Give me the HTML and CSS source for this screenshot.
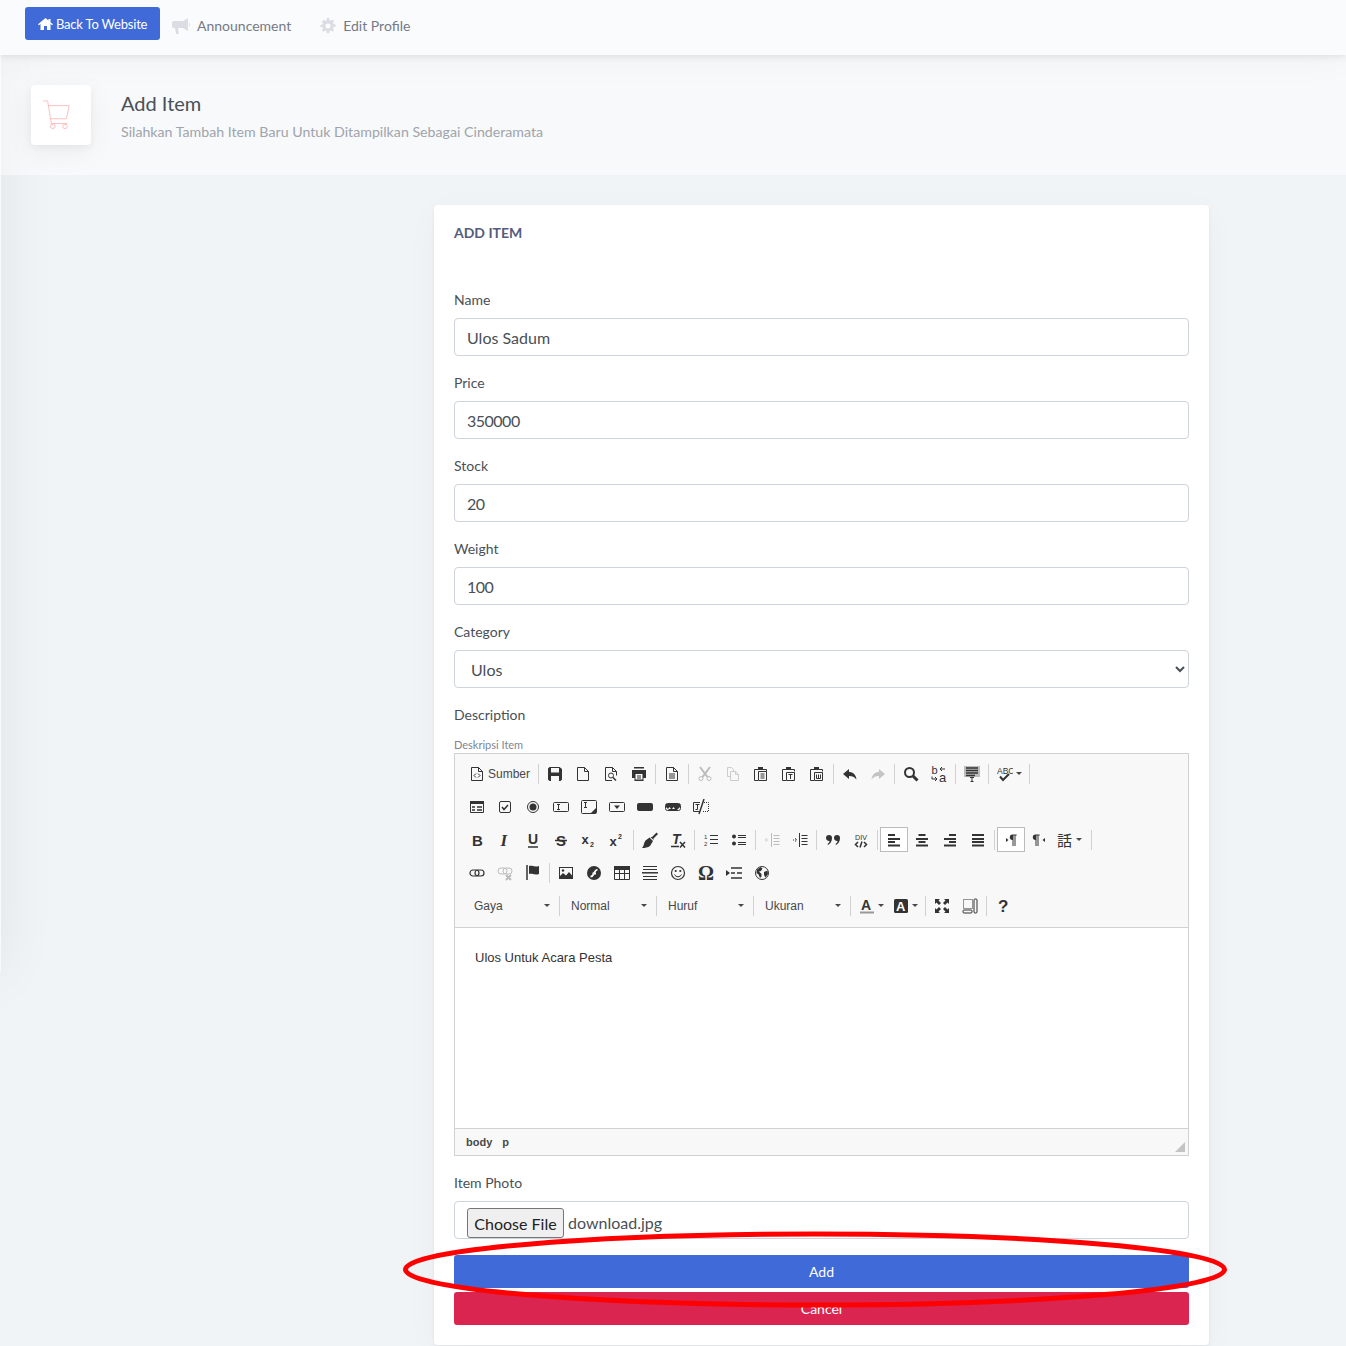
FILE: index.html
```html
<!DOCTYPE html>
<html lang="en">
<head>
  <meta charset="UTF-8">
  <title>Add Item</title>
  <link rel="stylesheet" href="styles.css">
</head>
<body>
  <svg class="defs" width="0" height="0">
    <defs>
      <symbol id="source" viewBox="0 0 16 16"><path class="ln" d="M2.500 1.500h7l4 4v9h-11zM9.500 1.500v4h4"/><path class="ln" d="M7 7.500 5 9.500l2 2M9 7.500l2 2-2 2"/></symbol>
      <symbol id="save" viewBox="0 0 16 16"><path class="sd" fill-rule="evenodd" d="M1 2.500 2.500 1h10L15 3v10.500L13.500 15h-11L1 13.500zM4 2v4.500h8V2zM4 10v5h8v-5z"/></symbol>
      <symbol id="newpage" viewBox="0 0 16 16"><path class="ln" d="M2.500 1.500h7l4 4v9h-11zM9.500 1.500v4h4"/></symbol>
      <symbol id="preview" viewBox="0 0 16 16"><path class="ln" d="M9 14.500H2.500v-13h7l4 4v4M9.500 1.500v4h4"/><circle class="ln" cx="8" cy="9.500" r="2.500"/><path class="thick" d="m10 11.500 3 3"/></symbol>
      <symbol id="print" viewBox="0 0 16 16"><path class="sd" fill-rule="evenodd" d="M3 1h10v1.500H3zM1 4h14v8h-2.500v3h-9v-3H1zM4.500 8v5.500h7V8z"/><path class="thin" d="M6 10h4M6 12h4"/></symbol>
      <symbol id="templates" viewBox="0 0 16 16"><path class="ln" d="M2.500 1.500h7l4 4v9h-11zM9.500 1.500v4h4M5 8h6M5 10h6M5 12h6"/></symbol>
      <symbol id="cut" viewBox="0 0 16 16"><circle class="ln-off" cx="4" cy="12.500" r="2"/><circle class="ln-off" cx="12" cy="12.500" r="2"/><path class="thick-off" d="M3 1l7.500 10M13 1 5.500 11"/></symbol>
      <symbol id="copy" viewBox="0 0 16 16"><path class="ln-pale" d="M2.500 1.500h4l2 2v2M2.500 1.500v9h3M5.500 5.500h5l3 3v6h-8zM10.500 5.500v3h3"/></symbol>
      <symbol id="paste" viewBox="0 0 16 16"><path class="ln" d="M5 3.500H1.500v11H5M10 3.500h3.500v2"/><path class="sd" d="M5 1h5v3H5z"/><path class="ln" d="M5.500 5.500h8v9h-8zM7.500 8h4M7.500 10h4M7.500 12h4"/></symbol>
      <symbol id="pastetext" viewBox="0 0 16 16"><path class="ln" d="M5 3.500H1.500v11H5M10 3.500h3.500v2"/><path class="sd" d="M5 1h5v3H5z"/><path class="ln" d="M5.500 6.500h8v8h-8zM7.500 8.500h4M9.500 8.500v4.500"/></symbol>
      <symbol id="pasteword" viewBox="0 0 16 16"><path class="ln" d="M5 3.500H1.500v11H5M10 3.500h3.500v2"/><path class="sd" d="M5 1h5v3H5z"/><path class="ln" d="M5.500 6.500h8v8h-8zM7.500 8.500v4h4v-4M9.500 8.500v4"/></symbol>
      <symbol id="undo" viewBox="0 0 16 16"><path class="sd" d="M7 3 1 8l6 5v-3c3.500 0 5.500 1 7.500 3.500C14 8.500 11 6 7 6z"/></symbol>
      <symbol id="redo" viewBox="0 0 16 16"><path class="sd-off" d="m9 3 6 5-6 5v-3c-3.500 0-5.500 1-7.500 3.500C2 8.500 5 6 9 6z"/></symbol>
      <symbol id="find" viewBox="0 0 16 16"><circle class="wide" cx="6.500" cy="6.500" r="4.500"/><path class="wider" d="m10 10 4.500 4.500"/></symbol>
      <symbol id="replace" viewBox="0 0 16 16"><text class="glyph" x="0.500" y="8" font-size="11">b</text><text class="glyph" x="8" y="16" font-size="13">a</text><path class="thin" d="M9 3h5M11 1 9 3l2 2M1 10.500v2.500h5M4 11l2 2-2 2"/></symbol>
      <symbol id="selectall" viewBox="0 0 16 16"><path fill="#bbb" d="M0 0h16v11H0z"/><path class="thick" d="M2 2h12M2 4.500h12M2 7h12M2 9.500h9"/><path class="thin" d="M6 11.500h4M8 11.500v4M6.500 15.500h3"/></symbol>
      <symbol id="spell" viewBox="0 0 16 16"><text class="glyph" x="0" y="8" font-size="8.500">ABC</text><path class="wide" d="m3 10.500 3 3.500 6-6"/></symbol>

      <symbol id="form" viewBox="0 0 16 16"><path class="ln" d="M1.500 2.500h13v11h-13z"/><path class="sd" d="M1 2h14v3H1z"/><path class="thick" d="M3 8h3M8 8h5M3 11h3M8 11h5"/></symbol>
      <symbol id="checkbox" viewBox="0 0 16 16"><rect class="ln" x="2.500" y="2.500" width="11" height="11" rx="1.500"/><path class="thick" d="m5 8 2 2.500L11 6"/></symbol>
      <symbol id="radio" viewBox="0 0 16 16"><circle class="ln" cx="8" cy="8" r="5.500"/><circle class="sd" cx="8" cy="8" r="3.500"/></symbol>
      <symbol id="textfield" viewBox="0 0 16 16"><rect class="ln" x="0.500" y="3.500" width="15" height="9" rx="1"/><path class="ln" d="M4 5.500h3M5.500 5.500v5M4 10.500h3"/></symbol>
      <symbol id="textarea" viewBox="0 0 16 16"><rect class="ln" x="0.500" y="1.500" width="15" height="13" rx="1"/><path class="ln" d="M3 3.500h3M4.500 3.500v5M3 8.500h3"/><path class="sd" d="M15 9v5H10z"/></symbol>
      <symbol id="select" viewBox="0 0 16 16"><rect class="ln" x="0.500" y="3.500" width="15" height="9" rx="1"/><path class="sd" d="M5 6.500h6L8 10z"/></symbol>
      <symbol id="button" viewBox="0 0 16 16"><rect class="sd" x="0" y="4" width="16" height="8" rx="2"/></symbol>
      <symbol id="imagebutton" viewBox="0 0 16 16"><rect class="ln" x="0.500" y="4.500" width="15" height="7" rx="2"/><path class="sd" d="M1 8l3 3h8l3-3v-3H1z"/><path fill="#f8f8f8" d="M3 10l1.500-2 1.500 2zM7 10l1.500-2 1.500 2z"/></symbol>
      <symbol id="hidden" viewBox="0 0 16 16"><path class="ln" d="M7 3.500H.500v9H6M2.500 5.500h4M4.500 5.500v5M2.500 10.500h2"/><path class="thick" d="M11 0 6 15"/><path class="dots" d="M9 3.500h6.500v9H9"/></symbol>

      <symbol id="bold" viewBox="0 0 16 16"><text class="glyph" x="3" y="13.500" font-size="15" font-weight="700">B</text></symbol>
      <symbol id="italic" viewBox="0 0 16 16"><text class="glyph serif" x="3.500" y="13.500" font-size="17" font-weight="700" font-style="italic">I</text></symbol>
      <symbol id="underline" viewBox="0 0 16 16"><text class="glyph" x="3" y="12" font-size="14" font-weight="700">U</text><path class="thick" d="M3 15h10"/></symbol>
      <symbol id="strike" viewBox="0 0 16 16"><text class="glyph" x="3" y="13.500" font-size="15" font-weight="700">S</text><path class="thick" d="M2 8.500h12"/></symbol>
      <symbol id="sub" viewBox="0 0 16 16"><text class="glyph" x="0.500" y="11.500" font-size="13" font-weight="700">x</text><text class="glyph" x="9" y="15" font-size="7" font-weight="700">2</text></symbol>
      <symbol id="sup" viewBox="0 0 16 16"><text class="glyph" x="0.500" y="13.500" font-size="13" font-weight="700">x</text><text class="glyph" x="9" y="7" font-size="7" font-weight="700">2</text></symbol>
      <symbol id="brush" viewBox="0 0 16 16"><path class="sd" d="M10 5 14.500 .500 16 2l-4.500 4.500L11.500 8 8.500 5zM7.500 5.500l3.500 3.500L8 14c-2 1.500-5 2-8 2 2-1.500 1.500-5 3.500-7.500z"/></symbol>
      <symbol id="removeformat" viewBox="0 0 16 16"><text class="glyph" x="2" y="12" font-size="14" font-weight="700" font-style="italic">T</text><path class="thick" d="M1 14.500h8"/><path class="thick" d="m10 10 5 5.500M15 10l-5 5.500"/></symbol>
      <symbol id="ol" viewBox="0 0 16 16"><text class="glyph" x="1" y="7" font-size="6">1</text><text class="glyph" x="1" y="14" font-size="6">2</text><path class="ln" d="M7 3.500h8M7 7.500h8M7 11.500h8"/></symbol>
      <symbol id="ul" viewBox="0 0 16 16"><circle class="sd" cx="3" cy="4.500" r="2"/><circle class="sd" cx="3" cy="11.500" r="2"/><path class="ln" d="M7 3.500h8M7 5.500h8M7 10.500h8M7 12.500h8"/></symbol>
      <symbol id="outdent" viewBox="0 0 16 16"><path class="ln-off" d="M7.500 1v14M9.500 3.500h6M9.500 6.500h6M9.500 9.500h6M9.500 12.500h6"/><path class="dots-off" d="M1 8h4M3 6l-2 2 2 2"/></symbol>
      <symbol id="indent" viewBox="0 0 16 16"><path class="ln" d="M7.500 1v14M9.500 3.500h6M9.500 6.500h6M9.500 9.500h6M9.500 12.500h6"/><path class="dots" d="M1 8h4M3 6l2 2-2 2"/></symbol>
      <symbol id="quote" viewBox="0 0 16 16"><path class="sd" d="M1 6a3 3 0 1 1 6 0C7 9.500 5.500 11.500 3 13l-.500-1C4 11 4.500 10 4.500 9A3 3 0 0 1 1 6zM9 6a3 3 0 1 1 6 0C15 9.500 13.500 11.500 11 13l-.500-1C12 11 12.500 10 12.500 9A3 3 0 0 1 9 6z"/></symbol>
      <symbol id="div" viewBox="0 0 16 16"><text class="glyph" x="2" y="7.500" font-size="8" textLength="12" lengthAdjust="spacingAndGlyphs">DIV</text><path class="thick" d="M5 10 2.500 12.500 5 15M11 10l2.500 2.500L11 15M9 9.500l-2 6"/></symbol>
      <symbol id="left" viewBox="0 0 16 16"><path class="bars" d="M2 3h7M2 7h12M2 10h7M2 13.500h12"/></symbol>
      <symbol id="center" viewBox="0 0 16 16"><path class="bars" d="M4.500 3h7M2 7h12M4.500 10h7M2 13.500h12"/></symbol>
      <symbol id="right" viewBox="0 0 16 16"><path class="bars" d="M7 3h7M2 7h12M7 10h7M2 13.500h12"/></symbol>
      <symbol id="justify" viewBox="0 0 16 16"><path class="bars" d="M2 3h12M2 7h12M2 10h12M2 13.500h12"/></symbol>
      <symbol id="ltr" viewBox="0 0 16 16"><path class="sd" d="M3 6v4l2.500-2zM9.500 2.500a2.700 2.700 0 0 0 0 5.400V14h1V3.500h1V14h1V3.500h1.200v-1z"/></symbol>
      <symbol id="rtl" viewBox="0 0 16 16"><path class="sd" d="M14 6v4l-2.500-2zM4.500 2.500a2.700 2.700 0 0 0 0 5.400V14h1V3.500h1V14h1V3.500h1.200v-1z"/></symbol>
      <symbol id="lang" viewBox="0 0 16 16"><text class="glyph cjk" x="0" y="14" font-size="15">話</text></symbol>

      <symbol id="link" viewBox="0 0 16 16"><rect class="thickish" x="1" y="5" width="9" height="6" rx="3"/><rect class="thickish" x="6" y="5" width="9" height="6" rx="3"/></symbol>
      <symbol id="unlink" viewBox="0 0 16 16"><rect class="ln-off" x="1" y="3" width="9" height="6" rx="3"/><rect class="ln-off" x="6" y="3" width="9" height="6" rx="3"/><path class="thick-off" d="m9 10 5 5M14 10l-5 5"/></symbol>
      <symbol id="anchor" viewBox="0 0 16 16"><path class="thick" d="M2 0v15"/><path class="sd" d="M4 1c3-1 5 1.500 10 0v8c-5 1.500-7-1-10 0z"/></symbol>
      <symbol id="image" viewBox="0 0 16 16"><rect class="ln" x="1.500" y="2.500" width="13" height="11"/><path class="sd" d="M2 13v-2l3-3 3 2.500L11 7l3 3.500V13z"/><circle class="sd" cx="5" cy="5.500" r="1.200"/></symbol>
      <symbol id="flash" viewBox="0 0 16 16"><circle class="sd" cx="8" cy="8" r="7"/><path class="wide-white" d="M4.500 11.500c3 0 2.500-2 3.500-3.500s1.500-3 3.500-3.500M6.500 8.500h3.500"/></symbol>
      <symbol id="table" viewBox="0 0 16 16"><path class="sd" d="M0 1h16v4H0z"/><path class="ln" d="M.500 1.500h15v13H.500zM.500 8.500h15M5.500 5v9.500M10.500 5v9.500"/></symbol>
      <symbol id="hr" viewBox="0 0 16 16"><path class="ln" d="M1 1.500h14M1 4.500h14M1 11.500h14M1 14.500h14"/><path class="thick" d="M0 7.800h16"/></symbol>
      <symbol id="smiley" viewBox="0 0 16 16"><circle class="thickish" cx="8" cy="8" r="6.500"/><circle class="sd" cx="5.700" cy="6" r="1.100"/><circle class="sd" cx="10.300" cy="6" r="1.100"/><path class="ln" d="M4.500 9.500c1.500 3 5.500 3 7 0"/></symbol>
      <symbol id="omega" viewBox="0 0 16 16"><text class="glyph serif" x="0" y="15" font-size="20" font-weight="700">Ω</text></symbol>
      <symbol id="pagebreak" viewBox="0 0 16 16"><path class="sd" d="M0 5v6l4-3z"/><path class="thick" d="M5 3h11M5 13h11M5 8h4M11 8h5"/></symbol>
      <symbol id="iframe" viewBox="0 0 16 16"><circle class="ln" cx="8" cy="8" r="6.500"/><path class="sd" d="M3 4.500 6.500 2 8.500 3.500 7 6 5 6.500 7.500 9 7.500 11.500 6 13 4.500 9.500 2.500 8zM10 7l3.500-1.500L14 9l-2.500 3.500L10 10z"/></symbol>

      <symbol id="textcolor" viewBox="0 0 16 16"><text class="glyph" x="2" y="12" font-size="14" font-weight="700">A</text><path class="under" d="M1 14.500h14"/></symbol>
      <symbol id="bgcolor" viewBox="0 0 16 16"><rect class="sd" x="1" y="1" width="14" height="14" rx="1.500"/><text class="glyph-white" x="3" y="13" font-size="13" font-weight="700">A</text></symbol>
      <symbol id="maximize" viewBox="0 0 16 16"><path class="sd" d="M1 1h5L4.500 2.500 7 5 5 7 2.500 4.500 1 6zM15 1v5l-1.500-1.500L11 7 9 5l2.500-2.500L10 1zM1 15v-5l1.500 1.500L5 9l2 2-2.500 2.500L6 15zM15 15h-5l1.500-1.500L9 11l2-2 2.500 2.500L15 10z"/></symbol>
      <symbol id="showblocks" viewBox="0 0 16 16"><path class="dots" d="M1.500 1.500h9v9h-9z"/><rect class="ln" x="1" y="12" width="9" height="3" rx="1"/><rect class="ln" x="12" y="1" width="3" height="14" rx="1"/></symbol>
      <symbol id="about" viewBox="0 0 16 16"><text class="glyph" x="3" y="14" font-size="17" font-weight="700">?</text></symbol>
    </defs>
  </svg>

  <div class="topbar">
    <a class="back-btn">
      <svg class="nav-icon" viewBox="0 0 16 16"><path fill="#fff" d="M8 2 .5 8.300l.9 1L3 8v6h3.500v-4h3v4H13V8l1.600 1.300.9-1L13 6.200V3h-2v1.500z"/></svg>
      Back To Website
    </a>
    <a class="nav-link announce">
      <svg class="nav-icon horn" viewBox="0 0 18 16"><path fill="#dadde3" d="M16 0v13l-5-3H6l1 6H4L3 10H2a2 2 0 0 1-2-2V5a2 2 0 0 1 2-2h9zM17 4.500a2.500 2.500 0 0 1 0 4z"/></svg>
      Announcement
    </a>
    <a class="nav-link">
      <svg class="nav-icon gear" viewBox="0 0 16 16"><path fill="#dadde3" fill-rule="evenodd" d="M6.800 0h2.400l.3 2.200 1.200.5L12.500 1.400l1.700 1.700-1.300 1.800.5 1.200 2.200.3v2.400l-2.200.3-.5 1.200 1.300 1.800-1.700 1.700-1.800-1.300-1.200.5-.3 2.200H6.800l-.3-2.200-1.200-.5-1.800 1.300-1.700-1.700 1.300-1.800-.5-1.200L.4 9.200V6.800l2.200-.3.500-1.200-1.300-1.800 1.700-1.700 1.800 1.300 1.200-.5zM8 5.500a2.500 2.500 0 1 0 0 5 2.500 2.500 0 0 0 0-5z"/></svg>
      Edit Profile
    </a>
  </div>

  <div class="side-shade"></div>

  <div class="page-title">
    <div class="title-icon">
      <svg class="cart" viewBox="0 0 32 32"><path fill="none" stroke="#fcbcbc" stroke-width="1" d="M1 1h5l4 24h17M6.500 6H29l-3 14H9M11 25v2M25 25v2"/><circle cx="11.500" cy="28" r="2.500" fill="none" stroke="#fcbcbc"/><circle cx="24.500" cy="28" r="2.500" fill="none" stroke="#fcbcbc"/></svg>
    </div>
    <div>
      <h1 class="title-text">Add Item</h1>
      <div class="title-sub">Silahkan Tambah Item Baru Untuk Ditampilkan Sebagai Cinderamata</div>
    </div>
  </div>

  <div class="content">
    <div class="card">
      <h5 class="card-title">ADD ITEM</h5>

      <div class="field">
        <label>Name</label>
        <input class="control" type="text" value="Ulos Sadum">
      </div>
      <div class="field">
        <label>Price</label>
        <input class="control digits" type="text" value="350000">
      </div>
      <div class="field">
        <label>Stock</label>
        <input class="control digits" type="text" value="20">
      </div>
      <div class="field">
        <label>Weight</label>
        <input class="control digits" type="text" value="100">
      </div>
      <div class="field">
        <label>Category</label>
        <select class="control">
          <option>Ulos</option>
        </select>
      </div>
      <div class="field">
        <label>Description</label>
        <div class="mini-label">Deskripsi Item</div>
        <div class="editor">
          <div class="toolbar">
            <div class="tb-row">
              <span class="tb source"><svg><use href="#source"/></svg><b>Sumber</b></span><i></i>
              <span class="tb"><svg><use href="#save"/></svg></span>
              <span class="tb"><svg><use href="#newpage"/></svg></span>
              <span class="tb"><svg><use href="#preview"/></svg></span>
              <span class="tb"><svg><use href="#print"/></svg></span><i></i>
              <span class="tb"><svg><use href="#templates"/></svg></span><i></i>
              <span class="tb"><svg><use href="#cut"/></svg></span>
              <span class="tb"><svg><use href="#copy"/></svg></span>
              <span class="tb"><svg><use href="#paste"/></svg></span>
              <span class="tb"><svg><use href="#pastetext"/></svg></span>
              <span class="tb"><svg><use href="#pasteword"/></svg></span><i></i>
              <span class="tb"><svg><use href="#undo"/></svg></span>
              <span class="tb"><svg><use href="#redo"/></svg></span><i></i>
              <span class="tb"><svg><use href="#find"/></svg></span>
              <span class="tb"><svg><use href="#replace"/></svg></span><i></i>
              <span class="tb"><svg><use href="#selectall"/></svg></span><i></i>
              <span class="tb drop"><svg><use href="#spell"/></svg><u></u></span><i></i>
            </div>
            <div class="tb-row">
              <span class="tb"><svg><use href="#form"/></svg></span>
              <span class="tb"><svg><use href="#checkbox"/></svg></span>
              <span class="tb"><svg><use href="#radio"/></svg></span>
              <span class="tb"><svg><use href="#textfield"/></svg></span>
              <span class="tb"><svg><use href="#textarea"/></svg></span>
              <span class="tb"><svg><use href="#select"/></svg></span>
              <span class="tb"><svg><use href="#button"/></svg></span>
              <span class="tb"><svg><use href="#imagebutton"/></svg></span>
              <span class="tb"><svg><use href="#hidden"/></svg></span>
            </div>
            <div class="tb-row">
              <span class="tb"><svg><use href="#bold"/></svg></span>
              <span class="tb"><svg><use href="#italic"/></svg></span>
              <span class="tb"><svg><use href="#underline"/></svg></span>
              <span class="tb"><svg><use href="#strike"/></svg></span>
              <span class="tb"><svg><use href="#sub"/></svg></span>
              <span class="tb"><svg><use href="#sup"/></svg></span><i></i>
              <span class="tb"><svg><use href="#brush"/></svg></span>
              <span class="tb"><svg><use href="#removeformat"/></svg></span><i></i>
              <span class="tb"><svg><use href="#ol"/></svg></span>
              <span class="tb"><svg><use href="#ul"/></svg></span><i></i>
              <span class="tb"><svg><use href="#outdent"/></svg></span>
              <span class="tb"><svg><use href="#indent"/></svg></span><i></i>
              <span class="tb"><svg><use href="#quote"/></svg></span>
              <span class="tb"><svg><use href="#div"/></svg></span><i></i>
              <span class="tb on"><svg><use href="#left"/></svg></span>
              <span class="tb"><svg><use href="#center"/></svg></span>
              <span class="tb"><svg><use href="#right"/></svg></span>
              <span class="tb"><svg><use href="#justify"/></svg></span><i></i>
              <span class="tb on"><svg><use href="#ltr"/></svg></span>
              <span class="tb"><svg><use href="#rtl"/></svg></span>
              <span class="tb drop"><svg class="lang"><use href="#lang"/></svg><u></u></span><i></i>
            </div>
            <div class="tb-row">
              <span class="tb"><svg><use href="#link"/></svg></span>
              <span class="tb"><svg><use href="#unlink"/></svg></span>
              <span class="tb"><svg><use href="#anchor"/></svg></span><i></i>
              <span class="tb"><svg><use href="#image"/></svg></span>
              <span class="tb"><svg><use href="#flash"/></svg></span>
              <span class="tb"><svg><use href="#table"/></svg></span>
              <span class="tb"><svg><use href="#hr"/></svg></span>
              <span class="tb"><svg><use href="#smiley"/></svg></span>
              <span class="tb"><svg><use href="#omega"/></svg></span>
              <span class="tb"><svg><use href="#pagebreak"/></svg></span>
              <span class="tb"><svg><use href="#iframe"/></svg></span>
            </div>
            <div class="tb-row combos">
              <span class="combo">Gaya<u></u></span><i></i>
              <span class="combo">Normal<u></u></span><i></i>
              <span class="combo">Huruf<u></u></span><i></i>
              <span class="combo">Ukuran<u></u></span><i></i>
              <span class="tb drop narrow"><svg><use href="#textcolor"/></svg><u></u></span>
              <span class="tb drop"><svg><use href="#bgcolor"/></svg><u></u></span><i></i>
              <span class="tb"><svg><use href="#maximize"/></svg></span>
              <span class="tb"><svg><use href="#showblocks"/></svg></span><i></i>
              <span class="tb"><svg><use href="#about"/></svg></span>
            </div>
          </div>
          <div class="editor-body">Ulos Untuk Acara Pesta</div>
          <div class="editor-foot"><b>body</b><b>p</b><span class="resizer"></span></div>
        </div>
      </div>
      <div class="field">
        <label>Item Photo</label>
        <div class="control file">
          <button class="file-btn" type="button">Choose File</button>
          <span>download.jpg</span>
        </div>
      </div>
      <button class="btn add" type="button">Add</button>
      <button class="btn cancel" type="button">Cancel</button>
    </div>
  </div>

  <svg class="annotation" viewBox="0 0 830 80"><ellipse cx="412" cy="39.500" rx="409.500" ry="35.500" fill="none" stroke="#f00" stroke-width="5"/></svg>
</body>
</html>
```

FILE: styles.css
```css
* {
  box-sizing: border-box;
}
html, body {
  height: 1346px;
  overflow: hidden;
}
body {
  margin: 0;
  position: relative;
  font-family: Lato, sans-serif;
  font-size: 14px;
  color: #495057;
  background-color: #f1f4f6;
}
.defs {
  position: absolute;
}

/* top bar */
.topbar {
  height: 55px;
  padding: 7px 25px 0;
  display: flex;
  align-items: flex-start;
  background-color: #fafbfc;
  box-shadow: 0 7px 35px rgba(4, 9, 20, 0.03), 0 1px 8px rgba(4, 9, 20, 0.1);
  position: relative;
  z-index: 2;
}
.back-btn {
  width: 135px;
  height: 33px;
  display: flex;
  align-items: center;
  gap: 2px;
  padding: 0 0 0 12px;
  background-color: #3f6ad8;
  border-radius: 3px;
  color: #fff;
  font-size: 13px;
  letter-spacing: -0.2px;
  white-space: nowrap;
}
.back-btn .nav-icon {
  width: 17px;
  height: 16px;
}
.nav-link {
  height: 38px;
  display: flex;
  align-items: center;
  color: #757a85;
  white-space: nowrap;
  margin-left: 29px;
  padding-bottom: 1px;
}
.announce {
  margin-left: 12px;
}
.horn {
  width: 18px;
  height: 16px;
  margin-right: 7px;
}
.gear {
  width: 16px;
  height: 16px;
  margin-right: 7px;
}

/* page title */
.side-shade {
  position: absolute;
  left: -100px;
  top: 0;
  width: 101px;
  height: 972px;
  background-color: #f7f9fb;
  box-shadow: 0 0 60px rgba(4, 9, 20, 0.07);
}
.page-title {
  height: 120px;
  padding: 30px 31px;
  display: flex;
  gap: 30px;
  background-color: rgba(255, 255, 255, 0.45);
  position: relative;
}
.title-icon {
  width: 60px;
  height: 60px;
  display: flex;
  align-items: center;
  justify-content: center;
  padding-right: 8px;
  background-color: #fff;
  border-radius: 4px;
  box-shadow: 0 7px 30px rgba(4, 9, 20, 0.05), 0 3px 8px rgba(4, 9, 20, 0.05);
}
.cart {
  width: 30px;
  height: 30px;
}
.title-text {
  margin: 3px 0 0;
  font-size: 20px;
  font-weight: 400;
  line-height: 30px;
  color: #495057;
}
.title-sub {
  margin-top: 4px;
  font-size: 14.200px;
  line-height: 20px;
  color: #a0a4ab;
}

/* card */
.content {
  padding: 30px 137px 0 434px;
}
.card {
  height: 1140px;
  padding: 20px;
  background-color: #fff;
  border-radius: 4px;
  box-shadow: 0 7px 35px rgba(4, 9, 20, 0.03), 0 2px 4px rgba(4, 9, 20, 0.06);
}
.card-title {
  height: 64px;
  margin: 0;
  font-size: 14px;
  font-weight: 700;
  line-height: 16px;
  color: #545c7c;
}
.field {
  margin-bottom: 16px;
}
label {
  display: block;
  margin-bottom: 8px;
  line-height: 21px;
}
.control {
  display: block;
  width: 100%;
  height: 38px;
  padding: 6px 12px;
  font-family: inherit;
  font-size: 16px;
  color: #495057;
  background-color: #fff;
  border: 1px solid #ced4da;
  border-radius: 4px;
}
.digits {
  letter-spacing: -0.5px;
}
.file {
  display: flex;
  align-items: flex-end;
  gap: 4px;
  padding: 0 12px;
}
.file-btn {
  width: 97px;
  height: 30px;
  padding: 0;
  font-family: inherit;
  font-size: 16px;
  color: #222;
  background-color: #efefef;
  border: 1px solid #767676;
  border-radius: 3px;
}
.file span {
  line-height: 30px;
}

/* editor */
.mini-label {
  margin-top: -1px;
  height: 21px;
  padding-top: 4px;
  font-size: 11px;
  line-height: 17px;
  color: #808690;
}
.editor {
  border: 1px solid #d1d1d1;
  font-family: "Liberation Sans", Arial, sans-serif;
}
.toolbar {
  height: 174px;
  padding: 3px 8px 0;
  background-color: #f8f8f8;
  border-bottom: 1px solid #d1d1d1;
}
.tb-row {
  height: 33px;
  display: flex;
  align-items: center;
}
.combos {
  padding-left: 2px;
}
.tb-row i {
  width: 1px;
  height: 20px;
  margin: 0 2px;
  flex: none;
  background-color: #d1d1d1;
}
.tb {
  width: 28px;
  height: 25px;
  flex: none;
  display: flex;
  align-items: center;
  border: 1px solid transparent;
  padding: 0 0 0 5px;
}
.tb svg {
  width: 16px;
  height: 16px;
  flex: none;
}
.tb svg.lang {
  margin-left: -2px;
}
.tb.on {
  background-color: #fff;
  border-color: #bcbcbc;
}
.source {
  width: 73px;
}
.source b {
  margin-left: 3px;
  font-size: 12px;
  font-weight: 400;
  color: #484848;
}
.drop {
  width: 36px;
}
.drop.narrow {
  width: 34px;
}
.tb-row u {
  width: 0;
  height: 0;
  flex: none;
  border: 3px solid transparent;
  border-top-color: #484848;
  border-bottom: 0;
}
.drop u {
  margin-left: 3px;
}
.combo {
  width: 92px;
  flex: none;
  display: flex;
  align-items: center;
  justify-content: space-between;
  padding: 0 7px 0 9px;
  font-size: 12px;
  color: #484848;
}
.editor-body {
  height: 200px;
  padding: 21px 20px 0;
  font-size: 13px;
  line-height: 18px;
  color: #333;
}
.editor-foot {
  height: 27px;
  padding: 0 11px 1px;
  display: flex;
  align-items: center;
  gap: 10px;
  position: relative;
  background-color: #f8f8f8;
  border-top: 1px solid #d1d1d1;
  font-size: 11px;
  color: #484848;
}
.resizer {
  position: absolute;
  right: 3px;
  bottom: 3px;
  border-style: solid;
  border-width: 0 0 10px 10px;
  border-color: transparent transparent #c4c4c4 transparent;
}

/* buttons */
.btn {
  display: block;
  width: 100%;
  height: 33px;
  margin-bottom: 4px;
  padding: 0;
  border: 0;
  border-radius: 3px;
  font-family: inherit;
  font-size: 14px;
  color: #fff;
}
.add {
  background-color: #3f6ad8;
}
.cancel {
  background-color: #d92550;
}

/* red marker drawn over the screenshot */
.annotation {
  position: absolute;
  left: 403px;
  top: 1230px;
  width: 830px;
  height: 80px;
}

/* icon strokes */
.ln { fill: none; stroke: #333; stroke-width: 1; }
.thin { fill: none; stroke: #333; stroke-width: 1; }
.thick { fill: none; stroke: #333; stroke-width: 1.500; }
.thickish { fill: none; stroke: #333; stroke-width: 1.200; }
.wide { fill: none; stroke: #333; stroke-width: 2; }
.wider { fill: none; stroke: #333; stroke-width: 3; }
.bars { fill: none; stroke: #333; stroke-width: 1.800; }
.sd { fill: #333; }
.dots { fill: none; stroke: #333; stroke-width: 1; stroke-dasharray: 1 1; }
.under { fill: none; stroke: #999; stroke-width: 2; }
.wide-white { fill: none; stroke: #fff; stroke-width: 1.800; }
.sd-off { fill: #c4c4c4; }
.ln-off { fill: none; stroke: #bcbcbc; stroke-width: 1; }
.ln-pale { fill: none; stroke: #ccc; stroke-width: 1; }
.thick-off { fill: none; stroke: #bcbcbc; stroke-width: 2; }
.dots-off { fill: none; stroke: #bcbcbc; stroke-width: 1; stroke-dasharray: 1 1; }
.glyph { fill: #333; font-family: "Liberation Sans", Arial, sans-serif; }
.glyph.serif { font-family: "Liberation Serif", serif; }
.glyph.cjk { font-family: "Noto Sans CJK JP", sans-serif; }
.glyph-white { fill: #fff; font-family: "Liberation Sans", Arial, sans-serif; }
```
